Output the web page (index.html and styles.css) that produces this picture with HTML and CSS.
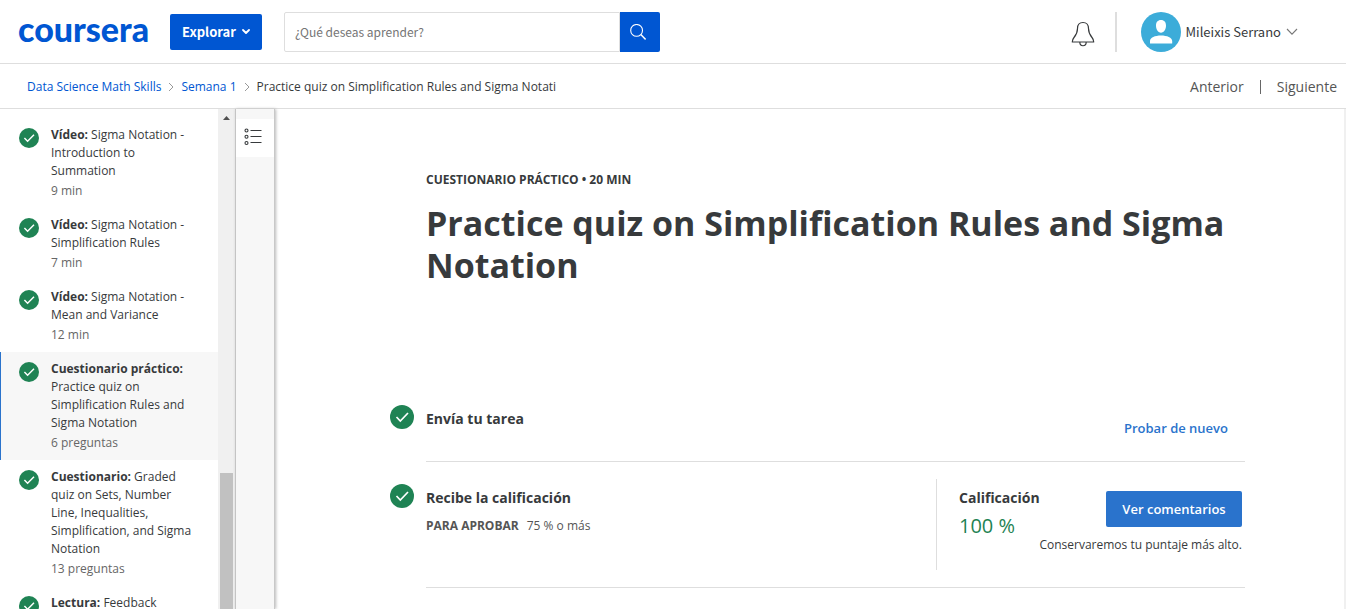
FILE: index.html
```html
<!DOCTYPE html>
<html lang="es">
<head>
<meta charset="utf-8">
<title>Practice quiz on Simplification Rules and Sigma Notation</title>
<link rel="stylesheet" href="styles.css">
</head>
<body>
<svg class="symbols" aria-hidden="true">
  <symbol id="check" viewBox="0 0 24 24">
    <circle cx="12" cy="12" r="12" fill="#1f8354"/>
    <path d="M6.5 12l3.8 4L18 8" fill="none" stroke="#fff" stroke-width="1.7"/>
  </symbol>
</svg>
<header class="topbar">
  <a class="logo" href="#">coursera</a>
  <button class="explore" type="button">Explorar
    <svg width="8" height="6" viewBox="0 0 8 6"><path d="M1 1l3 3 3-3" fill="none" stroke="#fff" stroke-width="1.8" stroke-linecap="round" stroke-linejoin="round"/></svg>
  </button>
  <form class="search">
    <input type="text" aria-label="Buscar" placeholder="¿Qué deseas aprender?">
    <button type="button" aria-label="Buscar">
      <svg width="16" height="16" viewBox="0 0 16 16" fill="none" stroke="#fff" stroke-width="1.1"><circle cx="6.6" cy="6.4" r="5.9"/><path d="M10.8 10.6l4.8 4.8" stroke-width="1.4"/></svg>
    </button>
  </form>
  <div class="account">
    <button class="bell" type="button" aria-label="Notificaciones">
      <svg width="24" height="26" viewBox="0 0 24 26" fill="none" stroke="#373a3c" stroke-width="1.2" stroke-linejoin="round"><path d="M12 1.500C8.500 1.500 6.500 4 6.500 7.500C6.500 12 5.500 13.500 3 16.500Q1.300 18.500 1.300 21H22.700Q22.700 18.500 21 16.500C18.500 13.500 17.500 12 17.500 7.500C17.500 4 15.500 1.500 12 1.500ZM8.800 21C8.800 26 15.200 26 15.200 21"/></svg>
    </button>
    <button class="user" type="button">
      <svg width="40" height="40" viewBox="0 0 40 40"><circle cx="20" cy="20" r="20" fill="#3cacd9"/><path d="M20 8c3.300 0 5 2.200 5 5.600 0 3.800-2 7.200-5 7.200s-5-3.400-5-7.200C15 10.200 16.700 8 20 8zM9 31.400v-2.500C9 25.500 14 23.400 20 23.400s11.200 2.100 11.200 5.500v2.500z" fill="#fff"/></svg>
      <span>Mileixis Serrano</span>
      <svg class="caret" width="12" height="8" viewBox="0 0 12 8"><path d="M1 1l5 5.200L11 1" fill="none" stroke="#777" stroke-width="1.100"/></svg>
    </button>
  </div>
</header>
<div class="subbar">
  <nav class="crumbs" aria-label="Ruta">
    <a href="#">Data Science Math Skills</a>
    <svg width="6" height="10" viewBox="0 0 6 10"><path d="M1 1l4 4-4 4" fill="none" stroke="#999"/></svg>
    <a href="#">Semana 1</a>
    <svg width="6" height="10" viewBox="0 0 6 10"><path d="M1 1l4 4-4 4" fill="none" stroke="#999"/></svg>
    <span>Practice quiz on Simplification Rules and Sigma Notati</span>
  </nav>
  <nav class="pager" aria-label="Páginas"><a href="#">Anterior</a><i></i><a href="#">Siguiente</a></nav>
</div>
<div class="body">
  <nav class="lessons" aria-label="Lecciones">
    <a class="lesson" href="#"><svg><use href="#check"/></svg><span class="text"><span><b>Vídeo:</b> Sigma Notation - Introduction to Summation</span><small>9 min</small></span></a>
    <a class="lesson" href="#"><svg><use href="#check"/></svg><span class="text"><span><b>Vídeo:</b> Sigma Notation - Simplification Rules</span><small>7 min</small></span></a>
    <a class="lesson" href="#"><svg><use href="#check"/></svg><span class="text"><span><b>Vídeo:</b> Sigma Notation - Mean and Variance</span><small>12 min</small></span></a>
    <a class="lesson current" href="#"><svg><use href="#check"/></svg><span class="text"><span><b>Cuestionario práctico:</b> Practice quiz on Simplification Rules and Sigma Notation</span><small>6 preguntas</small></span></a>
    <a class="lesson" href="#"><svg><use href="#check"/></svg><span class="text"><span><b>Cuestionario:</b> Graded quiz on Sets, Number Line, Inequalities, Simplification, and Sigma Notation</span><small>13 preguntas</small></span></a>
    <a class="lesson" href="#"><svg><use href="#check"/></svg><span class="text"><span><b>Lectura:</b> Feedback</span></span></a>
  </nav>
  <div class="scrollbar">
    <svg width="7" height="4" viewBox="0 0 7 4"><path d="M0 4L3.500 0 7 4z" fill="#505050"/></svg>
    <div class="thumb"></div>
  </div>
  <div class="rail">
    <button type="button" aria-label="Lista">
      <svg width="18" height="18" viewBox="0 0 18 18" fill="none" stroke="#373a3c" stroke-width="1.100"><circle cx="2.500" cy="2.500" r="1.500"/><circle cx="2.500" cy="8.800" r="1.500"/><circle cx="2.500" cy="15" r="1.500"/><path d="M6.500 2.500H17.500M6.500 8.500H17.500M6.500 14.500H17.500"/></svg>
    </button>
  </div>
  <main class="content">
    <p class="kind">CUESTIONARIO PRÁCTICO • 20 MIN</p>
    <h1>Practice quiz on Simplification Rules and Sigma Notation</h1>
    <section class="step">
      <svg><use href="#check"/></svg>
      <div class="panel first">
        <h2>Envía tu tarea</h2>
        <a class="retry" href="#">Probar de nuevo</a>
      </div>
    </section>
    <section class="step">
      <svg><use href="#check"/></svg>
      <div class="panel second">
        <div>
          <h2>Recibe la calificación</h2>
          <p class="pass"><b>PARA APROBAR</b><span>75 % o más</span></p>
        </div>
        <div class="grade">
          <div class="score"><h2>Calificación</h2><p>100 %</p></div>
          <button type="button">Ver comentarios</button>
          <p class="note">Conservaremos tu puntaje más alto.</p>
        </div>
      </div>
    </section>
  </main>
</div>
</body>
</html>
```
FILE: styles.css
```css
* { box-sizing: border-box; }
body {
  margin: 0;
  height: 100vh;
  overflow: hidden;
  display: flex;
  flex-direction: column;
  font: 12px/18px "Open Sans", sans-serif;
  color: #373a3c;
  background: #fff;
}
a { color: inherit; text-decoration: none; }
button { font: inherit; border: 0; padding: 0; background: none; color: inherit; cursor: pointer; }
h1, h2, p { margin: 0; }
svg { display: block; flex: none; }
.symbols { position: absolute; width: 0; height: 0; }

.topbar {
  flex: none;
  display: flex;
  align-items: center;
  height: 64px;
  padding: 0 48px 0 18px;
  border-bottom: 1px solid #dedede;
}
.logo { width: 130px; margin-right: 22px; padding-bottom: 5px; font: 900 34px/40px Lato, sans-serif; color: #0056d2; }
.explore {
  display: flex;
  align-items: center;
  justify-content: center;
  gap: 6px;
  width: 92px;
  height: 36px;
  margin-right: 22px;
  border-radius: 2px;
  background: #0056d2;
  color: #fff;
  font: bold 13px/20px "Noto Sans CJK JP", sans-serif;
}
.search { display: flex; width: 376px; height: 40px; }
.search input {
  flex: 1;
  min-width: 0;
  padding: 0 10px;
  border: 1px solid #dedede;
  border-radius: 2px 0 0 2px;
  font: 12px/20px "Noto Sans CJK JP", sans-serif;
}
.search input::placeholder { color: #757575; }
.search button {
  display: grid;
  place-items: center;
  width: 40px;
  padding-right: 4px;
  background: #0056d2;
  border-radius: 0 2px 2px 0;
}
.account { display: flex; align-items: center; height: 40px; margin-left: auto; }
.bell { padding: 4px 20px 0 0; }
.user {
  display: flex;
  align-items: center;
  height: 40px;
  padding-left: 24px;
  border-left: 2px solid #dedede;
  font: 13px/20px "Noto Sans CJK JP", sans-serif;
}
.user span { margin: 0 5px; }

.subbar {
  flex: none;
  display: flex;
  align-items: center;
  justify-content: space-between;
  height: 45px;
  padding: 2px 9px 0 27px;
  border-bottom: 1px solid #dedede;
}
.crumbs { display: flex; align-items: center; gap: 7px; }
.crumbs a { color: #0056d2; }
.pager { display: flex; align-items: center; font-size: 14px; color: #555; }
.pager i { width: 1px; height: 14px; margin: 0 16px; background: #666; }

.body { flex: 1; min-height: 0; display: flex; }
.lessons { width: 218px; padding-top: 9px; overflow: hidden; }
.lesson { display: flex; gap: 12px; padding: 8px 22px 8px 18px; border-left: 1px solid transparent; }
.lesson svg { width: 20px; height: 20px; margin-top: 2px; }
.text { display: flex; flex-direction: column; }
.text b { font-weight: 700; }
.lesson small { padding-top: 2px; font-size: 12px; line-height: 18px; color: #666; }
.current { background: #f7f7f7; border-left-color: #2a73cc; }
.scrollbar {
  display: flex;
  flex-direction: column;
  align-items: center;
  justify-content: space-between;
  width: 17px;
  padding-top: 7px;
  background: #f0f0f0;
}
.thumb { width: 13px; height: 136px; background: #c1c1c1; }
.rail {
  width: 40px;
  padding-top: 10px;
  border-left: 1px solid #c4c4c4;
  border-right: 1px solid #c8c8c8;
  background: #f7f7f7;
  box-shadow: 1px 0 3px #bbb;
}
.rail button { display: grid; place-items: center; width: 38px; height: 38px; padding: 0 4px 2px 0; background: #fff; }

.content { flex: 1; min-width: 0; padding: 62px 99px 0 115px; border-right: 2px solid #f0f0f0; }
.kind, .content h1 { padding-left: 36px; }
.kind { font-weight: 700; }
.content h1 { height: 202px; padding-top: 13px; font-size: 34px; line-height: 42px; font-weight: 700; }
.content h2 { font-size: 14px; line-height: 20px; font-weight: 700; }
.step { display: flex; gap: 12px; }
.step > svg { width: 24px; height: 24px; margin-top: 14px; }
.step + .step > svg { margin-top: 22px; }
.panel { flex: 1; display: flex; justify-content: space-between; border-bottom: 1px solid #dedede; }
.first { height: 71px; padding: 18px 17px 0 0; }
.retry { margin-top: 10px; font-size: 13px; font-weight: 600; color: #2a73cc; }
.second { padding: 17px 0; }
.second h2 { margin-top: 9px; }
.pass { display: flex; gap: 8px; margin-top: 9px; color: #555; }
.grade {
  display: grid;
  grid-template-columns: 1fr auto;
  align-content: start;
  width: 309px;
  height: 91px;
  padding: 0 3px 0 22px;
  border-left: 1px solid #dedede;
}
.score { height: 57px; }
.score p { margin-top: 5px; font-size: 20px; line-height: 26px; color: #1f8354; }
.grade button {
  width: 136px;
  height: 36px;
  margin-top: 12px;
  border-radius: 2px;
  background: #2a73cc;
  color: #fff;
  font-size: 13px;
  font-weight: 600;
}
.note { grid-column: 1 / 3; text-align: right; }
```
